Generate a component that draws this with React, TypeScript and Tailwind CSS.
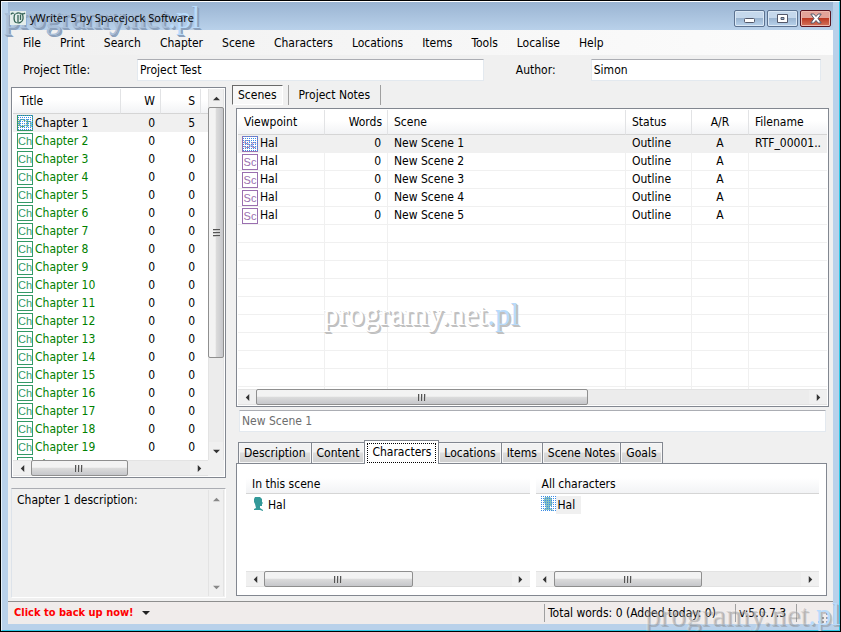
import { clsx } from "clsx";

const menuItems = [
  "File",
  "Print",
  "Search",
  "Chapter",
  "Scene",
  "Characters",
  "Locations",
  "Items",
  "Tools",
  "Localise",
  "Help",
];

const chapters = Array.from({ length: 20 }, (_, i) => ({
  title: `Chapter ${i + 1}`,
  words: 0,
  scenes: i === 0 ? 5 : 0,
}));

const scenes = [1, 2, 3, 4, 5].map((n) => ({
  viewpoint: "Hal",
  words: 0,
  title: `New Scene ${n}`,
  status: "Outline",
  ar: "A",
  file: n === 1 ? "RTF_00001.." : "",
}));

const sceneTabs = [
  "Description",
  "Content",
  "Characters",
  "Locations",
  "Items",
  "Scene Notes",
  "Goals",
];

const headCell =
  "border-b border-[#d5d5d5] bg-linear-to-b from-white from-45% to-[#f2f3f5] font-normal";

const dither =
  "bg-[conic-gradient(#3c8ce6_25%,transparent_0)] bg-size-[2px_2px]";

function Arrow({ dir }: { dir: "up" | "down" | "left" | "right" }) {
  const d = {
    up: "M0 6 4 2 8 6Z",
    down: "M0 2 4 6 8 2Z",
    left: "M6 0 2 4 6 8Z",
    right: "M2 0 6 4 2 8Z",
  }[dir];
  return (
    <svg viewBox="0 0 8 8" className="size-[7px]" fill="currentColor">
      <path d={d} />
    </svg>
  );
}

function ScrollX({ size = 60 }: { size?: number }) {
  return (
    <div className="flex h-4 shrink-0 border-y border-[#e3e3e3] bg-[#ececec] text-[#333]">
      <button aria-label="Scroll left" className="flex w-[18px] items-center justify-center bg-[#f0f0f0]">
        <Arrow dir="left" />
      </button>
      <div className="-my-px flex-1">
        <div
          className="flex h-4 items-center justify-center gap-px rounded-xs border border-[#8f8f8f] bg-linear-to-b from-[#f3f3f3] from-45% via-[#dcdcdc] via-50% to-[#c6c7cb]"
          style={{ width: `${size}%` }}
        >
          <i className="h-[7px] w-0.5 border-l border-[#555] bg-[#c8c8c8]" />
          <i className="h-[7px] w-0.5 border-l border-[#555] bg-[#c8c8c8]" />
          <i className="h-[7px] w-0.5 border-l border-[#555] bg-[#c8c8c8]" />
        </div>
      </div>
      <button aria-label="Scroll right" className="flex w-[18px] items-center justify-center bg-[#f0f0f0]">
        <Arrow dir="right" />
      </button>
    </div>
  );
}

function ScrollY({ size }: { size?: number }) {
  return (
    <div
      className={clsx(
        "flex w-4 shrink-0 flex-col border-x border-[#e3e3e3]",
        size ? "bg-[#ececec] text-[#333]" : "bg-[#f0f0f0] text-[#888]",
      )}
    >
      <button aria-label="Scroll up" className="flex h-[18px] items-center justify-center bg-[#f0f0f0]">
        <Arrow dir="up" />
      </button>
      <div className="-mx-px min-h-0 flex-1">
        {size && (
          <div
            className="flex w-4 flex-col items-center justify-center gap-px rounded-xs border border-[#8f8f8f] bg-linear-to-r from-[#f3f3f3] from-45% via-[#dcdcdc] via-50% to-[#c6c7cb]"
            style={{ height: `${size}%` }}
          >
            <i className="h-0.5 w-[7px] border-t border-[#555] bg-[#c8c8c8]" />
            <i className="h-0.5 w-[7px] border-t border-[#555] bg-[#c8c8c8]" />
            <i className="h-0.5 w-[7px] border-t border-[#555] bg-[#c8c8c8]" />
          </div>
        )}
      </div>
      <button aria-label="Scroll down" className="flex h-[18px] items-center justify-center bg-[#f0f0f0]">
        <Arrow dir="down" />
      </button>
    </div>
  );
}

function Badge({ text, selected }: { text: "Ch" | "Sc"; selected?: boolean }) {
  return (
    <span
      className={clsx(
        "relative flex size-4 shrink-0 items-center justify-center border bg-white font-['Liberation_Sans',sans-serif] text-[11px] leading-3",
        text === "Ch" ? "border-[#339966] text-[#339966]" : "border-[#9a6fb0] text-[#9a6fb0]",
      )}
    >
      {text}
      {selected && <span className={clsx("absolute -inset-px", dither)} />}
    </span>
  );
}

function Head({ selected }: { selected?: boolean }) {
  return (
    <span className="relative flex size-4 shrink-0 items-center justify-center">
      <svg
        viewBox="0 0 16 16"
        className={clsx("size-4", selected && "opacity-60")}
        fill="#339999"
      >
        <path d="M5 1h5l2 2v3l1 1-1 1v2h-2l0 2 3 2v1l-3-1H4v-1l2-1-.500-2L5 8 4 6V3Z" />
      </svg>
      {selected && <span className={clsx("absolute inset-0", dither)} />}
    </span>
  );
}

function Watermark({ className }: { className: string }) {
  return (
    <div
      aria-hidden="true"
      className={clsx(
        "pointer-events-none absolute font-['Liberation_Serif',serif] text-[31px] leading-9 whitespace-nowrap",
        className,
      )}
    >
      programy.net<span className="text-[#b9dbfb]">.pl</span>
    </div>
  );
}

function ChapterTree() {
  return (
    <section className="flex min-h-0 flex-1 flex-col border border-[#828790] bg-white p-px">
      <div className="flex min-h-0 flex-1">
        <div className="h-0 min-h-full flex-1 overflow-hidden">
          <table className="w-full table-fixed border-separate border-spacing-0">
            <thead>
              <tr className="h-[25px]">
                <th className={clsx(headCell, "border-r border-r-[#e2e3e5] pl-[7px] text-left")}>Title</th>
                <th className={clsx(headCell, "w-10 border-r border-r-[#e2e3e5] pr-[5px] text-right")}>W</th>
                <th className={clsx(headCell, "w-10 border-r border-r-[#e2e3e5] pr-[5px] text-right")}>S</th>
                <th aria-label="More" className={clsx(headCell, "w-[7px]")} />
              </tr>
            </thead>
            <tbody>
              {chapters.map((c, i) => (
                <tr key={c.title} className={clsx("h-[18px] leading-[18px]", i === 0 && "bg-[#f0f0f0]")}>
                  <td className="p-0 pl-1">
                    <div className={clsx("flex items-center gap-0.5", i > 0 && "text-[#008000]")}>
                      <Badge text="Ch" selected={i === 0} />
                      {c.title}
                    </div>
                  </td>
                  <td className="p-0 pr-1.5 text-right">{c.words}</td>
                  <td className="p-0 pr-1.5 text-right">{c.scenes}</td>
                  <td className="p-0" />
                </tr>
              ))}
            </tbody>
          </table>
        </div>
        <ScrollY size={75} />
      </div>
      <div className="flex">
        <div className="flex-1">
          <ScrollX size={61} />
        </div>
        <div className="w-4 bg-[#f0f0f0]" />
      </div>
    </section>
  );
}

function SceneGrid() {
  const cell = "border-r border-b border-[#f0f0f0] p-0";
  const head = clsx(headCell, "border-r border-r-[#e2e3e5] p-0");
  return (
    <section className="relative flex min-h-0 flex-1 flex-col border border-[#828790] bg-white p-px">
      <div className="h-0 flex-1 overflow-hidden">
        <table className="w-full table-fixed border-separate border-spacing-0">
          <thead>
            <tr className="h-[25px]">
              <th className={clsx(head, "w-[87px] pl-1.5 text-left")}>Viewpoint</th>
              <th className={clsx(head, "w-[63px] pr-[5px] text-right")}>Words</th>
              <th className={clsx(head, "pl-1.5 text-left")}>Scene</th>
              <th className={clsx(head, "w-[66px] pl-1.5 text-left")}>Status</th>
              <th className={clsx(head, "w-[57px] text-center")}>A/R</th>
              <th className={clsx(headCell, "w-[78px] p-0 pl-1.5 text-left")}>Filename</th>
            </tr>
          </thead>
          <tbody>
            {scenes.map((s, i) => (
              <tr key={s.title} className={clsx("h-[18px] leading-[17px]", i === 0 && "bg-[#f0f0f0]")}>
                <td className={cell}>
                  <div className="flex items-center gap-0.5 pl-1">
                    <Badge text="Sc" selected={i === 0} />
                    {s.viewpoint}
                  </div>
                </td>
                <td className={clsx(cell, "pr-1.5 text-right")}>{s.words}</td>
                <td className={clsx(cell, "pl-1.5")}>{s.title}</td>
                <td className={clsx(cell, "pl-1.5")}>{s.status}</td>
                <td className={clsx(cell, "text-center")}>{s.ar}</td>
                <td className="overflow-hidden border-b border-[#f0f0f0] p-0 pl-1.5 whitespace-nowrap">{s.file}</td>
              </tr>
            ))}
            {Array.from({ length: 10 }, (_, i) => (
              <tr key={i} className="h-[18px]">
                <td className={cell} />
                <td className={cell} />
                <td className={cell} />
                <td className={cell} />
                <td className={cell} />
                <td className="border-b border-[#f0f0f0] p-0" />
              </tr>
            ))}
          </tbody>
        </table>
      </div>
      <ScrollX />
      <Watermark className="top-[188px] left-[86px] text-white [text-shadow:2px_2px_0_#c0c0c0,1px_1px_0_#c0c0c0]" />
    </section>
  );
}

function CharacterList({ title, selected }: { title: string; selected?: boolean }) {
  return (
    <div className="flex flex-1 flex-col">
      <h3 className="h-5 border-b border-[#d5d5d5] bg-linear-to-b from-white from-20% to-[#f2f3f5] pl-1.5 leading-5">
        {title}
      </h3>
      <div className="flex flex-1 items-start pt-0.5 pl-1">
        <Head selected={selected} />
        <span className={clsx("px-0.5 leading-[18px]", selected && "bg-[#f0f0f0] pr-1.5")}>Hal</span>
      </div>
      <ScrollX />
    </div>
  );
}

function TitleBar() {
  const box =
    "flex h-[17px] w-[31px] items-center justify-center rounded-xs border border-[#5c7290] shadow-[inset_0_0_0_1px_#dbe8f5]";
  const glass = "bg-linear-to-b from-[#c5d8ec] from-45% via-[#9bb5d1] via-50% to-[#b9d3ec]";
  return (
    <header className="relative flex h-7 shrink-0 items-center bg-linear-to-b from-[#9ab4d2] to-[#b9d1ea] px-0.5 pt-1">
      <Watermark className="-top-0.5 -left-1 text-[#a9bfd9] [text-shadow:2px_2px_0_#8ba0bb,1px_1px_0_#8ba0bb]" />
      <svg viewBox="0 0 16 16" className="relative mr-1 size-4">
        <path d="M0 1h16v14H0Z" fill="#e4eeec" />
        <path
          d="M1 4.500C1.500 3 3 3 3.800 3.500M5.500 3.500C3.500 5 3.500 11.500 6 12.500c3 1 6.500 0 7-3.500.300-3-.500-5-2-5.500C9.500 3 7 2.500 6.500 4M8 5v7M10.500 4.500V10M12 3.500c1 .500 2 .500 3-.500"
          fill="none"
          stroke="#356457"
          strokeWidth="1.300"
        />
      </svg>
      <h1 className="relative flex-1 font-['Open_Sans',sans-serif] text-[11px]">yWriter 5 by Spacejock Software</h1>
      <div className="flex gap-0.5">
        <button aria-label="Minimize" className={clsx(box, glass)}>
          <svg viewBox="0 0 11 11" className="size-[11px]">
            <rect x="0.500" y="5.500" width="10" height="4" rx="1" fill="#fff" stroke="#53586a" />
          </svg>
        </button>
        <button aria-label="Maximize" className={clsx(box, glass)}>
          <svg viewBox="0 0 11 11" className="size-[11px]">
            <path d="M.5 1.500h10v8H.5ZM4 4.500v2h3v-2Z" fill="#fff" fillRule="evenodd" stroke="#53586a" />
          </svg>
        </button>
        <button
          aria-label="Close"
          className="flex h-[17px] w-[31px] items-center justify-center rounded-xs border border-[#5a1420] bg-linear-to-b from-[#e3a399] from-45% via-[#bd3a24] via-50% to-[#d4735a] shadow-[inset_0_0_0_1px_#eeb9ae]"
        >
          <svg viewBox="0 0 12 11" className="h-[11px] w-3">
            <path
              d="M.8 1h3L6 3.500 8.200 1h3L8 5.500 11.200 10h-3L6 7.500 3.800 10h-3L4 5.500Z"
              fill="#fff"
              stroke="#53586a"
            />
          </svg>
        </button>
      </div>
    </header>
  );
}

export default function App() {
  const input = "h-[22px] min-w-0 border border-[#e3e9ef] border-t-[#abadb3] bg-white px-0.5";
  return (
    <div className="relative flex h-screen flex-col overflow-hidden border border-black bg-[#b9d1ea] font-['DejaVu_Sans_Condensed',Tahoma,'DejaVu_Sans',sans-serif] text-[12px] leading-4 text-black">
      <div className="flex min-h-0 flex-1 flex-col border border-[#2fc8e6] border-t-white border-l-[#e6f1fa] bg-[#b9d1ea] px-1.5 pb-1.5">
        <TitleBar />
        <main className="flex min-h-0 flex-1 flex-col bg-[#f0f0f0]">
          <nav className="flex h-[25px] shrink-0 items-center gap-px bg-linear-to-r from-[#f0f0f0] to-[#fcfcfc] pl-1.5">
            {menuItems.map((m) => (
              <button key={m} className="px-[9px]">
                {m}
              </button>
            ))}
          </nav>

          <div className="flex h-[30px] shrink-0 items-center pr-3 pl-[15px]">
            <label htmlFor="title" className="w-[114px]">
              Project Title:
            </label>
            <input id="title" className={clsx(input, "flex-[348]")} defaultValue="Project Test" />
            <label htmlFor="author" className="ml-8 w-[75px]">
              Author:
            </label>
            <input id="author" className={clsx(input, "flex-[229]")} defaultValue="Simon" />
          </div>

          <div className="flex min-h-0 flex-1 pr-1 pl-[3px]">
            <div className="flex w-[215px] shrink-0 flex-col gap-2.5 pt-0.5 pb-[3px]">
              <ChapterTree />
              <div className="flex h-[110px] shrink-0 border border-white border-t-[#abadb3] border-l-[#dde3ea] p-px">
                <textarea
                  aria-label="Chapter description"
                  className="flex-1 resize-none bg-transparent px-1 pt-0.5 outline-none"
                  defaultValue="Chapter 1 description:"
                />
                <ScrollY />
              </div>
            </div>

            <div className="ml-1.5 flex min-w-0 flex-1 flex-col pb-[5px]">
              <div className="flex h-[23px] shrink-0 items-start">
                <button className="h-5 border border-white border-t-[#696969] border-l-[#696969] bg-[#f8f8f8] px-[5px]">
                  Scenes
                </button>
                <div className="ml-[5px] flex h-5 items-center border-x border-[#a0a0a0] px-2.5">
                  <button>Project Notes</button>
                </div>
              </div>
              <div className="flex min-h-0 flex-1 flex-col pl-1">
                <SceneGrid />
                <input
                  aria-label="Scene title"
                  className={clsx(input, "mt-[3px] mr-[3px] ml-[3px] text-[#6d6d6d]")}
                  defaultValue="New Scene 1"
                />
                <div role="tablist" className="mt-2 flex h-[23px] shrink-0 items-end pl-0.5">
                  {sceneTabs.map((t) =>
                    t === "Characters" ? (
                      <button
                        key={t}
                        role="tab"
                        aria-selected="true"
                        className="relative z-10 -mr-px -mb-px h-6 border border-b-0 border-[#828790] bg-white p-0.5"
                      >
                        <span className="block h-5 border border-dotted border-black px-1">{t}</span>
                      </button>
                    ) : (
                      <button
                        key={t}
                        role="tab"
                        aria-selected="false"
                        className="-mr-px h-[21px] border border-b-0 border-[#828790] bg-linear-to-b from-[#f2f2f2] from-45% via-[#dddddd] via-50% to-[#cfcfcf] px-[5px] shadow-[inset_0_0_0_1px_#f7f7f7]"
                      >
                        {t}
                      </button>
                    ),
                  )}
                </div>
                <div className="mr-0.5 flex h-[133px] shrink-0 gap-1.5 border border-[#828790] bg-white px-[7px] pt-2.5 pb-2 pl-[9px]">
                  <CharacterList title="In this scene" />
                  <CharacterList title="All characters" selected />
                </div>
              </div>
            </div>
          </div>

          <footer className="flex h-[23px] shrink-0 items-center border-t border-[#8e8e8e] bg-[#f0eceb] pl-1.5">
            <button className="flex items-center gap-2 text-[11px] font-bold text-[#ff0000]">
              Click to back up now!
              <svg viewBox="0 0 8 4" className="h-1 w-2" fill="#222">
                <path d="M0 0h8L4 4Z" />
              </svg>
            </button>
            <span className="ml-auto flex h-[18px] w-[191px] items-center border-l border-[#a0a0a0] pl-[3px]">
              Total words: 0 (Added today: 0)
            </span>
            <span className="flex h-[18px] w-[62px] items-center border-x border-[#a0a0a0] pl-[3px]">
              v:5.0.7.3
            </span>
            <svg viewBox="0 0 12 12" className="mr-1 ml-5 size-3 self-end" fill="#9a9a9a">
              <path d="M9 1h2v2H9ZM9 5h2v2H9ZM9 9h2v2H9ZM5 5h2v2H5ZM5 9h2v2H5ZM1 9h2v2H1Z" />
            </svg>
          </footer>
        </main>
      </div>
      <Watermark className="right-0 -bottom-0.5 text-white/20 [text-shadow:2px_2px_0_#80808066,1px_1px_0_#80808044]" />
    </div>
  );
}
